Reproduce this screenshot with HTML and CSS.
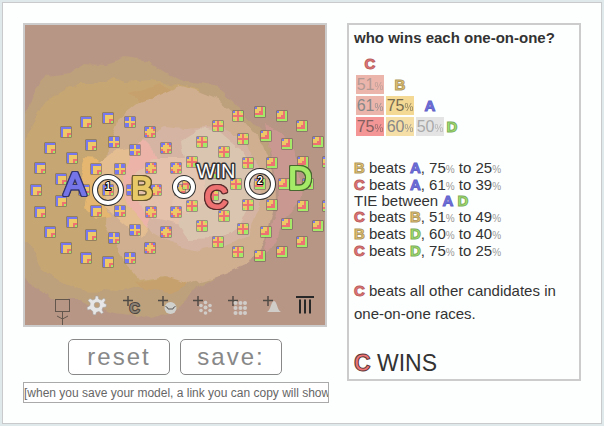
FILE: index.html
```html
<!DOCTYPE html>
<html lang="en">
<head>
<meta charset="utf-8">
<title>Election sandbox</title>
<link rel="stylesheet" href="styles.css">
</head>
<body>
<main class="frame">
  <section class="model">
    <svg class="arena" viewBox="25 25 300 300" role="img" aria-label="Voters and candidates">
      <defs>
        <filter id="rough" filterUnits="userSpaceOnUse" x="0" y="25" width="325" height="300" color-interpolation-filters="sRGB">
          <feTurbulence type="fractalNoise" baseFrequency="0.05" numOctaves="3" seed="4"/>
          <feDisplacementMap in="SourceGraphic" scale="9" xChannelSelector="R" yChannelSelector="G"/>
        </filter>
      </defs>
      <rect x="25" y="25" width="300" height="300" fill="#b89686"/>
      <g filter="url(#rough)">
        <path fill="#bda07c" d="M10 134 L26 112 L36 88 L46 77 L70 74 L86 63 L105 64 L126 57 L150 61 L163 70 L184 82 L216 86 L240 108 L270 140 L270 220 L230 270 L200 284 L188 300 L175 312 L150 318 L110 312 L80 300 L50 300 L35 285 L10 265Z"/>
        <path fill="#c6a773" d="M10 165 L32 125 L44 105 L62 92 L78 83 L105 83 L113 77 L125 82 L150 80 L166 82 L200 90 L200 260 L150 284 L120 292 L80 290 L60 282 L40 268 L30 245 L10 235Z"/>
        <path fill="#c7a16d" d="M130 95 L160 83 L172 88 L160 97 L140 102Z M136 282 L170 276 L192 283 L170 293 L145 290Z"/>
        <path fill="#d0af90" d="M108 148 L118 120 L140 102 L160 94 L178 86 L198 91 L220 100 L243 120 L264 145 L273 170 L274 205 L265 240 L248 264 L225 274 L190 284 L165 276 L140 280 L125 262 L112 240 L104 225Z"/>
        <path fill="#c99890" d="M266 124 L280 130 L290 147 L298 165 L302 190 L299 205 L287 217 L276 242 L262 253 L270 230 L277 210 L276 170 L270 148Z"/>
        <path fill="#e4b670" d="M85 159 L98 160 L106 168 L102 205 L110 216 L96 218 L84 207 L88 190 L80 175Z"/>
        <path fill="#e4bd91" d="M100 163 L115 151 L130 149 L142 158 L154 185 L148 225 L142 238 L120 220 L103 207Z"/>
        <path fill="#d5b4a3" d="M144 137 L165 126 L185 128 L200 127 L225 128 L243 140 L258 165 L260 205 L248 235 L225 245 L198 251 L172 244 L150 232 L140 215 L138 165Z"/>
        <path fill="#ecb4a9" d="M130 154 L143 139 L154 150 L160 168 L155 205 L148 228 L129 206 L121 185Z"/>
        <path fill="#e4c1ab" d="M134 174 L152 158 L184 158 L202 171 L204 205 L186 225 L154 218 L138 203Z"/>
        <path fill="#dac5b1" d="M180 140 L200 128 L222 132 L241 148 L253 170 L253 199 L241 223 L220 238 L190 239 L178 222 L193 202 L194 174 L183 159Z"/>
        <path fill="#e4c6b2" d="M178 166 L190 161 L205 174 L205 202 L190 212 L174 205Z"/>
      </g>
      <g id="voters"></g>

      <g class="ring">
        <circle class="ring-dark" cx="108" cy="190" r="13"/><circle class="ring-light" cx="108" cy="190" r="13"/>
        <circle class="ring-dark" cx="184" cy="187" r="9"/><circle class="ring-light" cx="184" cy="187" r="9"/>
        <circle class="ring-dark" cx="260" cy="184" r="13"/><circle class="ring-light" cx="260" cy="184" r="13"/>
      </g>
      <text class="tag" x="108" y="190">1</text>
      <text class="tag" x="260" y="184">2</text>
      <text class="letter letter-a" x="75" y="195">A</text>
      <text class="letter letter-b" x="142" y="199">B</text>
      <text class="letter letter-c" x="216" y="208">C</text>
      <text class="letter letter-d" x="300" y="189">D</text>
      <text class="win" x="216" y="178">WIN</text>

      <g fill="none" stroke="#62564d">
        <rect x="55.5" y="299.5" width="14" height="12"/>
        <path d="M62.500 312V325M57 316L62.500 319L68 316"/>
      </g>
      <g fill="#e6e6e6" stroke="#a6a29d" stroke-width="0.6">
        <path d="M95.500 296L98 296L98.700 299L101.500 300L104 298L105.500 300L103.800 303L106.500 304.500L106 307L102.800 307.500L102 310L103.500 312.500L101.500 313.800L99 311.500L96.500 312.300L95.500 315L93 314.500L92.800 311.500L90.500 309.500L87.500 310L87 307.500L90 305.500L90.200 303L88 300.500L90 298.500L92.800 300L95 299Z"/>
        <circle cx="97" cy="305" r="2.800" fill="#bf9f79"/>
      </g>
      <path stroke="#514b46" stroke-width="1.500" d="M123 300.500H133M128 296V306M158 300.500H168M163 296V306M193 300.500H203M198 296V306M228 300.500H238M233 296V306M263 300.500H273M268 296V306"/>
      <text class="add-letter" x="134.500" y="313">C</text>
      <circle cx="170.500" cy="308" r="6" fill="#d0d0cd"/>
      <path d="M165.500 306.500L167.500 307.500L168 309H173L173.500 307.500L175.500 306.500" fill="none" stroke="#5d5955"/>
      <g fill="#d0cdc9">
        <circle cx="205.500" cy="307.500" r="2"/><circle cx="205.500" cy="302.500" r="1.800"/><circle cx="205.500" cy="313" r="1.800"/>
        <circle cx="201" cy="305.500" r="1.800"/><circle cx="201" cy="310.500" r="1.800"/><circle cx="210" cy="305.500" r="1.800"/><circle cx="210" cy="310.500" r="1.800"/>
        <circle cx="235.500" cy="303" r="2"/><circle cx="240.500" cy="303" r="2"/><circle cx="245" cy="303" r="2"/>
        <circle cx="235.500" cy="308" r="2"/><circle cx="240.500" cy="308" r="2"/><circle cx="245" cy="308" r="2"/>
        <circle cx="235.500" cy="313" r="2"/><circle cx="240.500" cy="313" r="2"/><circle cx="245" cy="313" r="2"/>
        <path d="M267 312C271 310 271 301 274 301C277 301 277 310 281 312Z"/>
      </g>
      <path fill="none" stroke="#282828" stroke-width="2" d="M296 297H314M300 299.500V313.500M305 299.500V313.500M310 299.500V313.500"/>
    </svg>
    <div class="actions">
      <button type="button">reset</button>
      <button type="button">save:</button>
    </div>
    <input class="link" type="text" readonly aria-label="Model link" value="[when you save your model, a link you can copy will show up here]">
  </section>

  <section class="results">
    <h1>who wins each one-on-one?</h1>
    <table>
      <tr><th><b class="c">C</b></th></tr>
      <tr><td class="r1">51<small>%</small></td><th><b class="b">B</b></th></tr>
      <tr><td class="r2">61<small>%</small></td><td class="y2">75<small>%</small></td><th><b class="a">A</b></th></tr>
      <tr><td class="r3">75<small>%</small></td><td class="y1">60<small>%</small></td><td class="tie">50<small>%</small></td><th class="last"><b class="d">D</b></th></tr>
    </table>
    <ul>
      <li><b class="b">B</b> beats <b class="a">A</b>, 75<small>%</small> to 25<small>%</small></li>
      <li><b class="c">C</b> beats <b class="a">A</b>, 61<small>%</small> to 39<small>%</small></li>
      <li class="draw">TIE between <b class="a">A</b> <b class="d">D</b></li>
      <li><b class="c">C</b> beats <b class="b">B</b>, 51<small>%</small> to 49<small>%</small></li>
      <li><b class="b">B</b> beats <b class="d">D</b>, 60<small>%</small> to 40<small>%</small></li>
      <li><b class="c">C</b> beats <b class="d">D</b>, 75<small>%</small> to 25<small>%</small></li>
    </ul>
    <p><b class="c">C</b> beats all other candidates in one-on-one races.</p>
    <p class="winner"><b class="c">C</b> WINS</p>
  </section>
</main>
<script src="voters.js"></script>
</body>
</html>
```
FILE: styles.css
```css
* { box-sizing: border-box; }

body {
  margin: 2px;
  background: #dfe9ec;
  color: #333;
  font: 15px/17px "Liberation Sans", Arial, sans-serif;
}

.frame {
  display: grid;
  grid-template-columns: 304fr 234fr;
  gap: 20px;
  align-items: start;
  padding: 20px;
  border: 1px solid #c8cacc;
  background: #fdfffe;
}

.model { min-width: 0; }

.arena {
  display: block;
  width: 100%;
  border: 2px solid #ccc;
  font-family: "Liberation Sans", Arial, sans-serif;
}

.ring { fill: none; }
.ring-dark { stroke: #333; stroke-width: 6px; }
.ring-light { stroke: #fff; stroke-width: 4px; }

.letter, .win, .tag, .add-letter {
  text-anchor: middle;
  paint-order: stroke;
  stroke-linejoin: round;
}
.letter {
  fill: var(--ink);
  stroke: var(--ink);
  stroke-width: 2px;
  font-size: 32px;
  filter: drop-shadow(1px 0 0 var(--edge)) drop-shadow(-1px 0 0 var(--edge)) drop-shadow(0 1px 0 var(--edge)) drop-shadow(0 -1px 0 var(--edge));
}
.letter-a { --ink: #7575e8; --edge: #34346c; }
.letter-b { --ink: #e8c968; --edge: #655730; }
.letter-c { --ink: #ee7272; --edge: #5a2c2c; }
.letter-d { --ink: #a4ea68; --edge: #47692f; }
.win { font-size: 20px; fill: #fff; stroke: #333; stroke-width: 3px; }
.tag { font-size: 10px; font-weight: bold; fill: #fff; stroke: #000; stroke-width: 2px; }
.add-letter { font-size: 14px; font-weight: bold; fill: #8b8174; stroke: #4d463f; stroke-width: 2px; }

.actions {
  display: flex;
  justify-content: center;
  gap: 10px;
  padding: 12px 0 7px;
}

.actions button {
  width: 102px;
  height: 36px;
  padding: 0;
  border: 1px solid #888;
  border-radius: 5px;
  background: #fff;
  color: #888;
  font: 24px/34px "Liberation Sans", Arial, sans-serif;
  letter-spacing: 2px;
}

.link {
  display: block;
  box-sizing: content-box;
  width: 100%;
  height: 19px;
  padding: 0;
  border: 1px solid #aaa;
  background: #fff;
  color: #666;
  font: 12px "Liberation Sans", Arial, sans-serif;
}

.results {
  padding: 4px 5px;
  border: 2px solid #ccc;
}

h1 {
  margin: 0 0 6px;
  font-size: 15px;
  line-height: 17px;
}

table {
  border-collapse: separate;
  border-spacing: 2px;
}

td, th {
  width: 28px;
  height: 19px;
  padding: 0;
  text-align: center;
  line-height: 19px;
}

td { color: #888; font-size: 16px; white-space: nowrap; }
.last { width: 12px; }
.r1, .r2 { background: #ecb5ac; }
.r1 { color: #b39993; }
.r3 { background: #f49696; color: #85605f; }
.y1 { background: #f5dfa6; }
.y2 { background: #f3d993; color: #776b50; }
.tie { background: #e4e4e4; color: #aaa; }

small { color: #999; font-size: 10px; line-height: 1px; }
td small { color: inherit; opacity: 0.8; }

b { -webkit-text-stroke: 1px #77716a; }
.a { color: #7272e2; -webkit-text-stroke-color: #6262c8; }
.b { color: #ecc86a; -webkit-text-stroke-color: #b09a64; }
.c { color: #f07878; -webkit-text-stroke-color: #b86060; }
.d { color: #a6ec6c; -webkit-text-stroke-color: #7cab5c; }

ul {
  margin: 21px 0 20px;
  padding: 0;
  list-style: none;
}
.draw { line-height: 15px; }

p { margin: 0; line-height: 23px; }
.winner { margin-top: 26px; font-size: 23px; line-height: 24px; }
.winner .c { color: #ee7474; -webkit-text-stroke: 1px #5c3434; }
```
FILE: voters.js
```js
// Each voter is drawn as a 5x5 tile of the candidate colours it ranks.
const colours = { B: "#7777ee", Y: "#eec866", R: "#ee7272", G: "#a4ea68" };
const tiles = {
  a: ["BBBBB", "BYYYY", "BYYYY", "BYYRR", "BYYRG"],
  ab: ["BBYBB", "BBYBB", "YYYYY", "BBYRR", "BBYRG"],
  b: ["BBYRB", "BYYYR", "YYYYY", "RYYRR", "BRYRG"],
  c: ["BYRYG", "YYRYY", "RRRRR", "YYRGG", "GYRGG"],
  d: ["BYYRG", "YYYRG", "YYRRG", "RRRRG", "GGGGG"]
};

function kind(x) {
  if (x < 110) return "a";
  if (x < 138) return "ab";
  if (x < 184) return "b";
  return x < 259 ? "c" : "d";
}

function voter(x, y) {
  const left = Math.round(x - 5), top = Math.round(y - 5);
  let out = `<rect x="${left - .5}" y="${top - .5}" width="11" height="11" fill="#5f5b50"/>`;
  tiles[kind(x)].forEach((row, j) => [...row].forEach((c, i) => {
    out += `<rect x="${left + i * 2}" y="${top + j * 2}" width="2" height="2" fill="${colours[c]}"/>`;
  }));
  return out;
}

let markup = "";
for (const [cx, cy] of [[108, 190], [260, 184]]) {
  for (const [radius, count] of [[0, 1], [24, 6], [48, 13], [72, 20]]) {
    for (let i = 0; i < count; i++) {
      const angle = 2 * Math.PI * i / count;
      markup += voter(cx + radius * Math.cos(angle), cy + radius * Math.sin(angle));
    }
  }
}
document.getElementById("voters").innerHTML = markup;
```
